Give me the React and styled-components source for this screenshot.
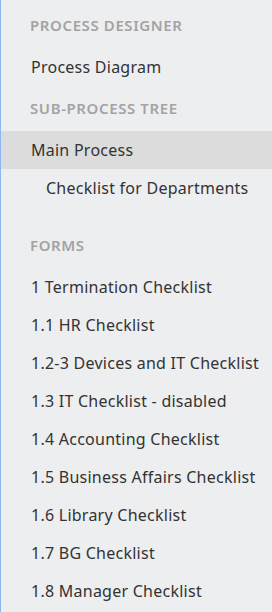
import React from "react";
import styled, { createGlobalStyle } from "styled-components";

const GlobalStyle = createGlobalStyle`
  html, body {
    margin: 0;
    padding: 0;
    background: #edeef0;
  }
  body {
    font-family: "Noto Sans", "Open Sans", sans-serif;
  }
`;

const sections = [
  {
    title: "Process Designer",
    items: [{ label: "Process Diagram" }],
  },
  {
    title: "Sub-Process Tree",
    items: [
      { label: "Main Process", active: true },
      { label: "Checklist for Departments", depth: 1 },
    ],
  },
  {
    title: "Forms",
    spaced: true,
    items: [
      { label: "1 Termination Checklist" },
      { label: "1.1 HR Checklist" },
      { label: "1.2-3 Devices and IT Checklist" },
      { label: "1.3 IT Checklist - disabled" },
      { label: "1.4 Accounting Checklist" },
      { label: "1.5 Business Affairs Checklist" },
      { label: "1.6 Library Checklist" },
      { label: "1.7 BG Checklist" },
      { label: "1.8 Manager Checklist" },
    ],
  },
];

export default function App() {
  return (
    <>
      <GlobalStyle />
      <Sidebar>
        {sections.map((section) => (
          <Section key={section.title} $spaced={section.spaced}>
            <SectionTitle>{section.title}</SectionTitle>
            {section.items.map((item) => (
              <NavItem key={item.label} $active={item.active} $depth={item.depth || 0}>
                {item.label}
              </NavItem>
            ))}
          </Section>
        ))}
      </Sidebar>
    </>
  );
}

const Sidebar = styled.nav`
  width: 272px;
  height: 612px;
  box-sizing: border-box;
  padding-top: 3px;
  border-left: 1px solid #8cb5f5;
  background: #edeef0;
  display: flex;
  flex-direction: column;
  overflow: hidden;
`;

const Section = styled.section`
  display: flex;
  flex-direction: column;
  margin-top: ${(p) => (p.$spaced ? "16px" : "0")};
`;

const SectionTitle = styled.div`
  padding: 3px 0 4px 29px;
  line-height: 38px;
  font-size: 15px;
  font-weight: 600;
  letter-spacing: 0.6px;
  text-transform: uppercase;
  color: #a3a3a3;
  white-space: nowrap;
`;

const NavItem = styled.div`
  height: 38px;
  line-height: 38px;
  margin-left: -1px;
  padding-left: ${(p) => 30 + p.$depth * 15}px;
  font-size: 16px;
  letter-spacing: 0.25px;
  color: #333333;
  white-space: nowrap;
  background: ${(p) => (p.$active ? "#dcdcdc" : "transparent")};
  border-left: 1px solid ${(p) => (p.$active ? "#dcdcdc" : "#8cb5f5")};
  cursor: pointer;
`;
